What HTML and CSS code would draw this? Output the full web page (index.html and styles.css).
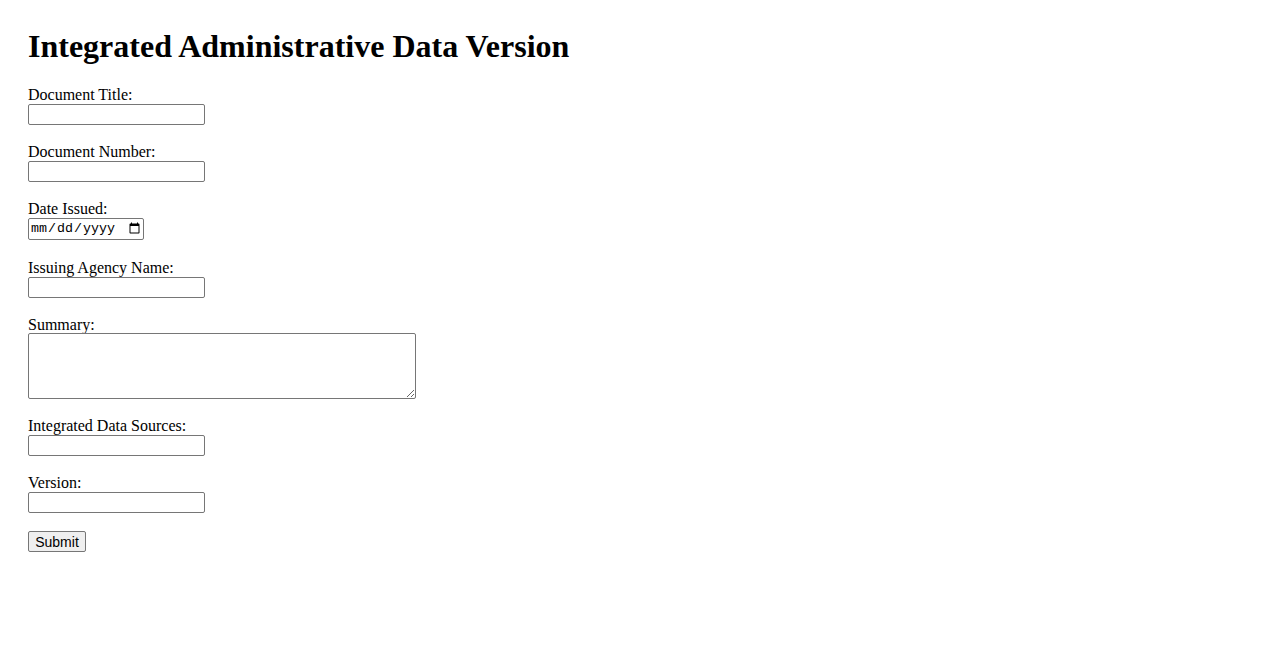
FILE: index.html
```html
<!DOCTYPE html>
<html lang="en">
<head>
    <meta charset="UTF-8">
    <meta name="viewport" content="width=device-width, initial-scale=1.0">
    <title>Integrated Administrative Data Version</title>
    <link rel="stylesheet" href="styles.css">
</head>
<body>
    <h1>Integrated Administrative Data Version</h1>
    <form class="doc-form">
        <label for="doc-title">Document Title:</label><br>
        <input type="text" id="doc-title" name="doc-title"><br><br>

        <label for="doc-number">Document Number:</label><br>
        <input type="text" id="doc-number" name="doc-number"><br><br>

        <label for="date-issued">Date Issued:</label><br>
        <input type="date" id="date-issued" name="date-issued"><br><br>

        <label for="agency">Issuing Agency Name:</label><br>
        <input type="text" id="agency" name="agency"><br><br>

        <label for="summary">Summary:</label><br>
        <textarea id="summary" name="summary" rows="4" cols="50"></textarea><br><br>

        <label for="sources">Integrated Data Sources:</label><br>
        <input type="text" id="sources" name="sources"><br><br>

        <label for="version">Version:</label><br>
        <input type="text" id="version" name="version"><br><br>

        <input type="submit" value="Submit">
    </form>
</body>
</html>
```

FILE: styles.css
```css
body {
    font-family: "Liberation Serif", "Times New Roman", serif;
    font-size: 16px;
    margin: 0;
    padding: 28px;
    color: #000;
    background-color: #fff;
}
h1 {
    font-size: 32px;
    font-weight: bold;
    margin: 0 0 21px 0;
}
.doc-form input,
.doc-form textarea {
    font-family: "Liberation Sans", Arial, sans-serif;
    font-size: 13.33px;
    box-sizing: border-box;
    border: 1px solid #767676;
    border-radius: 2px;
    margin: 0;
}
.doc-form input[type="text"] {
    width: 177px;
    height: 21px;
}
.doc-form input[type="date"] {
    font-family: "Liberation Mono", "Courier New", monospace;
    width: 116px;
    height: 22px;
    margin-bottom: 1px;
}
.doc-form textarea {
    font-family: "Liberation Mono", "Courier New", monospace;
    width: 388px;
    height: 66px;
    margin-top: -1px;
    vertical-align: bottom;
}
.doc-form input[type="submit"] {
    width: 58px;
    height: 21px;
    font-size: 14px;
    background-color: #efefef;
}
```
